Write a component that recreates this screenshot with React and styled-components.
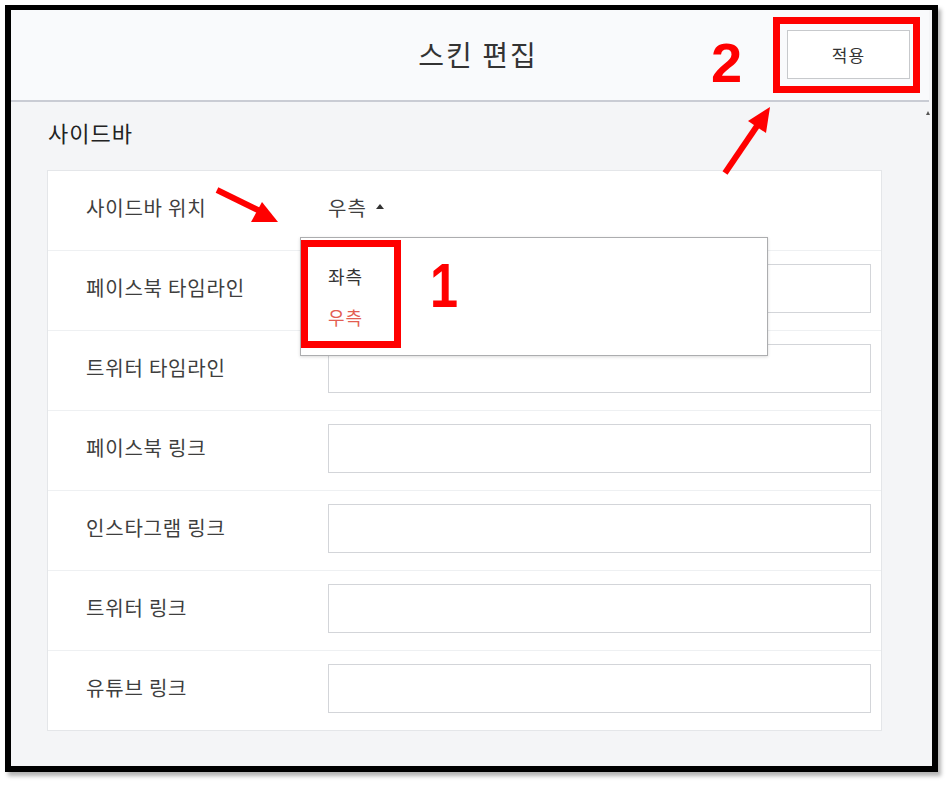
import React from "react";
import styled, { createGlobalStyle } from "styled-components";

const Global = createGlobalStyle`
  html, body { margin: 0; padding: 0; background: #ffffff; }
  body { font-family: "Noto Sans CJK KR", "Noto Sans", sans-serif; }
  * { box-sizing: border-box; }
`;

const Page = styled.div`
  position: relative;
  width: 950px;
  height: 785px;
  padding: 5px 0 0 5px;
`;

const Frame = styled.div`
  width: 933px;
  height: 767px;
  border: 6px solid #000;
  border-top-width: 5px;
  box-shadow: 3px 4px 4px rgba(0, 0, 0, 0.3);
  display: flex;
  flex-direction: column;
  background: #f4f5f7;
  overflow: hidden;
`;

const Header = styled.header`
  height: 92px;
  flex: none;
  background: #f9fafc;
  border-bottom: 2px solid #c9ccd4;
  display: flex;
  align-items: center;
  justify-content: center;
  position: relative;
  margin-right: 3px;
`;

const Title = styled.h1`
  margin: 0;
  font-size: 28px;
  font-weight: 400;
  color: #333;
  letter-spacing: 2px;
  transform: translate(8px, -1px);
`;

const ApplyButton = styled.button`
  position: absolute;
  right: 19px;
  top: 20px;
  width: 123px;
  height: 49px;
  background: #fff;
  border: 1px solid #c7c9cc;
  font-family: inherit;
  font-size: 17px;
  letter-spacing: 1px;
  color: #333;
`;

const Body = styled.div`
  flex: 1;
  padding: 4px 0 0 36px;
  display: flex;
  flex-direction: column;
`;

const SectionTitle = styled.h2`
  margin: 0 0 12px;
  height: 52px;
  display: flex;
  align-items: center;
  font-size: 22px;
  font-weight: 400;
  letter-spacing: 1px;
  color: #222;
  padding-left: 1px;
`;

const Card = styled.div`
  position: relative;
  width: 835px;
  background: #fff;
  border: 1px solid #e4e6e9;
`;

const Row = styled.div`
  height: ${(p) => (p.$first ? "79px" : "80px")};
  display: flex;
  align-items: center;
  padding-bottom: 4px;
  border-top: ${(p) => (p.$first ? "none" : "1px solid #eef0f2")};
`;

const Label = styled.div`
  width: 280px;
  padding-left: 38px;
  padding-bottom: 3px;
  font-size: 20px;
  letter-spacing: 0.8px;
  color: #3e3e3e;
  flex: none;
`;

const Input = styled.div`
  width: 543px;
  height: 49px;
  border: 1px solid #d3d5d9;
  background: #fff;
`;

const SelectValue = styled.div`
  font-size: 20px;
  letter-spacing: 1.2px;
  color: #3e3e3e;
  display: flex;
  align-items: center;
  gap: 9px;
  padding-bottom: 3px;
`;

const Caret = styled.span`
  width: 0;
  height: 0;
  border-left: 4.5px solid transparent;
  border-right: 4.5px solid transparent;
  border-bottom: 5px solid #333;
  margin-top: -2px;
`;

const Dropdown = styled.div`
  position: absolute;
  left: 252px;
  top: 66px;
  width: 468px;
  height: 119px;
  background: #fff;
  border: 1px solid #acadaf;
  box-shadow: 0 1px 3px rgba(0, 0, 0, 0.15);
  padding: 24px 0 0 27px;
  display: flex;
  flex-direction: column;
  gap: 12px;
  z-index: 2;
`;

const Option = styled.div`
  font-size: 18px;
  letter-spacing: 1px;
  line-height: 29px;
  color: ${(p) => (p.$active ? "#e35d52" : "#333")};
`;

const RedBox = styled.div`
  position: absolute;
  border: 7px solid #ff0000;
  z-index: 5;
`;

const Num = styled.div`
  position: absolute;
  font-family: "Liberation Sans", Arial, sans-serif;
  font-weight: 700;
  color: #ff0000;
  line-height: 1;
  z-index: 5;
  transform-origin: left top;
`;

const ArrowSvg = styled.svg`
  position: absolute;
  left: 0;
  top: 0;
  z-index: 6;
  pointer-events: none;
`;

const ScrollUp = styled.div`
  position: absolute;
  left: 926px;
  top: 111px;
  width: 0;
  height: 0;
  border-left: 2.5px solid transparent;
  border-right: 2.5px solid transparent;
  border-bottom: 4px solid #555;
`;

const rows = [
  "페이스북 타임라인",
  "트위터 타임라인",
  "페이스북 링크",
  "인스타그램 링크",
  "트위터 링크",
  "유튜브 링크",
];

export default function App() {
  return (
    <>
      <Global />
      <Page>
        <Frame>
          <Header>
            <Title>스킨 편집</Title>
            <ApplyButton>적용</ApplyButton>
          </Header>
          <Body>
            <SectionTitle>사이드바</SectionTitle>
            <Card>
              <Row $first>
                <Label>사이드바 위치</Label>
                <SelectValue>
                  우측 <Caret />
                </SelectValue>
              </Row>
              {rows.map((r) => (
                <Row key={r}>
                  <Label>{r}</Label>
                  <Input />
                </Row>
              ))}
              <Dropdown>
                <Option>좌측</Option>
                <Option $active>우측</Option>
              </Dropdown>
            </Card>
          </Body>
        </Frame>
        <ScrollUp />
        <RedBox style={{ left: 773, top: 17, width: 147, height: 76 }} />
        <RedBox style={{ left: 301, top: 240, width: 100, height: 108 }} />
        <Num style={{ left: 711, top: 35, fontSize: 56 }}>2</Num>
        <Num style={{ left: 430, top: 254, fontSize: 63, transform: "scaleX(0.8)" }}>1</Num>
        <ArrowSvg width="950" height="785" viewBox="0 0 950 785">
          <line x1="217" y1="190" x2="262" y2="212" stroke="#ff0000" strokeWidth="6" />
          <polygon points="278,222 251,222 262,202" fill="#ff0000" />
          <line x1="725" y1="173" x2="757" y2="126" stroke="#ff0000" strokeWidth="6" />
          <polygon points="770,107 766,133 748,121" fill="#ff0000" />
        </ArrowSvg>
      </Page>
    </>
  );
}
